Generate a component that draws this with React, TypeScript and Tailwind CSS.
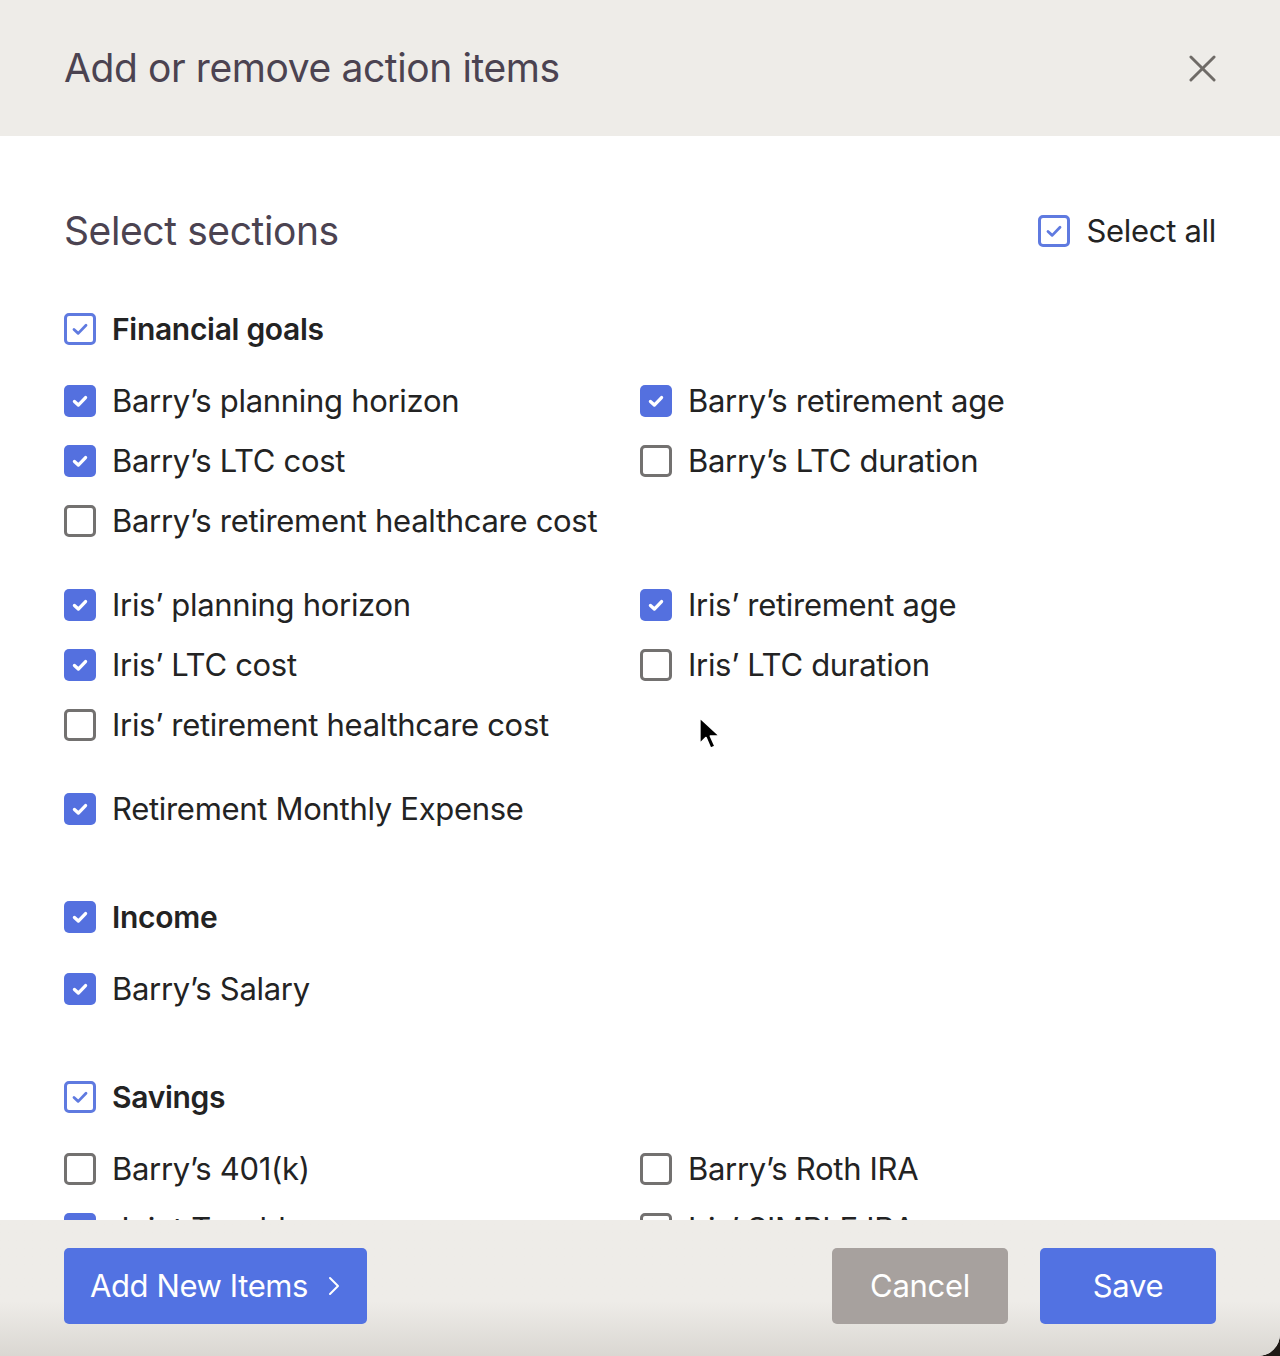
import React, { FC } from 'react';

type Item = { label: string; checked: boolean };
type Group = Item[];
type Section = { title: string; state: 'partial' | 'checked'; groups: Group[] };

const Sections: Section[] = [
  {
    title: 'Financial goals',
    state: 'partial',
    groups: [
      [
        { label: 'Barry’s planning horizon', checked: true },
        { label: 'Barry’s retirement age', checked: true },
        { label: 'Barry’s LTC cost', checked: true },
        { label: 'Barry’s LTC duration', checked: false },
        { label: 'Barry’s retirement healthcare cost', checked: false }
      ],
      [
        { label: 'Iris’ planning horizon', checked: true },
        { label: 'Iris’ retirement age', checked: true },
        { label: 'Iris’ LTC cost', checked: true },
        { label: 'Iris’ LTC duration', checked: false },
        { label: 'Iris’ retirement healthcare cost', checked: false }
      ],
      [{ label: 'Retirement Monthly Expense', checked: true }]
    ]
  },
  {
    title: 'Income',
    state: 'checked',
    groups: [[{ label: 'Barry’s Salary', checked: true }]]
  },
  {
    title: 'Savings',
    state: 'partial',
    groups: [
      [
        { label: 'Barry’s 401(k)', checked: false },
        { label: 'Barry’s Roth IRA', checked: false },
        { label: 'Joint Taxable', checked: true },
        { label: 'Iris’ SIMPLE IRA', checked: false },
        { label: 'Iris’ Roth IRA', checked: false }
      ]
    ]
  }
];

const Check: FC<{ className?: string; width?: number }> = ({ className, width = 2 }) => (
  <svg viewBox="0 0 16 16" className={className} fill="none" stroke="currentColor" strokeWidth={width} strokeLinecap="round" strokeLinejoin="round">
    <path d="M4.3 8.3l2.6 2.4 4.8-5" />
  </svg>
);

const Box: FC<{ state: 'checked' | 'partial' | 'empty' }> = ({ state }) => {
  if (state === 'checked') {
    return (
      <span className="flex h-8 w-8 shrink-0 items-center justify-center rounded-[5px] bg-[#5470df] text-white">
        <Check className="h-6 w-6" width={2.2} />
      </span>
    );
  }
  if (state === 'partial') {
    return (
      <span className="flex h-8 w-8 shrink-0 items-center justify-center rounded-[5px] border-[3px] border-[#5f7ae0] bg-white text-[#5f7ae0]">
        <Check className="h-[26px] w-[26px]" width={1.7} />
      </span>
    );
  }
  return <span className="h-8 w-8 shrink-0 rounded-[5px] border-[3px] border-[#737170] bg-white" />;
};

const Row: FC<{ item: Item }> = ({ item }) => (
  <div className="flex h-[60px] items-center gap-4">
    <Box state={item.checked ? 'checked' : 'empty'} />
    <span className="text-[31px] tracking-[-0.3px] text-[#232323]">{item.label}</span>
  </div>
);

const App: FC = () => {
  return (
    <div className="h-[1356px] w-full bg-[#1f1a16] font-['Inter',sans-serif]">
      <div className="relative flex h-full flex-col overflow-hidden rounded-br-[22px] bg-white">
        <div className="flex h-[136px] shrink-0 items-center justify-between bg-[#eeece8] pl-16 pr-[64px]">
          <h1 className="text-[39px] tracking-[-0.4px] text-[#4b4351]">Add or remove action items</h1>
          <svg viewBox="0 0 28 28" className="h-[27px] w-[27px] text-[#6f6b67]" stroke="currentColor" strokeWidth={3} strokeLinecap="round">
            <path d="M2 2l24 24M26 2L2 26" />
          </svg>
        </div>

        <div className="flex-1 overflow-hidden px-16 pt-[65px]">
          <div className="flex h-[60px] items-center justify-between">
            <h2 className="text-[39px] tracking-[-0.4px] text-[#4b4351]">Select sections</h2>
            <div className="flex items-center gap-4">
              <Box state="partial" />
              <span className="text-[31px] tracking-[-0.3px] text-[#232323]">Select all</span>
            </div>
          </div>

          <div className="mt-[38px] flex flex-col gap-12">
            {Sections.map(section => (
              <div key={section.title}>
                <div className="flex h-[60px] items-center gap-4">
                  <Box state={section.state} />
                  <span className="text-[30px] font-semibold tracking-[-0.3px] text-[#232323]">{section.title}</span>
                </div>
                <div className="mt-3 flex flex-col gap-6">
                  {section.groups.map((group, i) => (
                    <div key={i} className="grid grid-cols-2">
                      {group.map(item => (
                        <Row key={item.label} item={item} />
                      ))}
                    </div>
                  ))}
                </div>
              </div>
            ))}
          </div>
        </div>

        <div className="flex h-[136px] shrink-0 items-start justify-between bg-gradient-to-b from-[#eeece8] from-60% to-[#dad7d2] px-16 pt-7">
          <button className="flex h-[76px] items-center gap-5 rounded-[5px] bg-[#5272e2] pl-[26px] pr-[27px] text-[31px] tracking-[-0.4px] text-white">
            Add New Items
            <svg viewBox="0 0 12 20" className="h-5 w-3" fill="none" stroke="currentColor" strokeWidth={2} strokeLinecap="round" strokeLinejoin="round">
              <path d="M2 2l8 8-8 8" />
            </svg>
          </button>
          <div className="flex gap-8">
            <button className="h-[76px] w-[176px] rounded-[5px] bg-[#a7a19e] text-[31px] tracking-[-0.3px] text-white">Cancel</button>
            <button className="h-[76px] w-[176px] rounded-[5px] bg-[#5272e2] text-[31px] tracking-[-0.3px] text-white">Save</button>
          </div>
        </div>

        <svg viewBox="0 0 14 22" className="absolute left-[698px] top-[716px] h-[34px] w-[22px]">
          <path d="M1 1v17l4-4 3 7 3-1.3-3-6.7h6z" fill="#000" stroke="#fff" strokeWidth={1.2} strokeLinejoin="round" />
        </svg>
      </div>
    </div>
  );
};

export default App;
